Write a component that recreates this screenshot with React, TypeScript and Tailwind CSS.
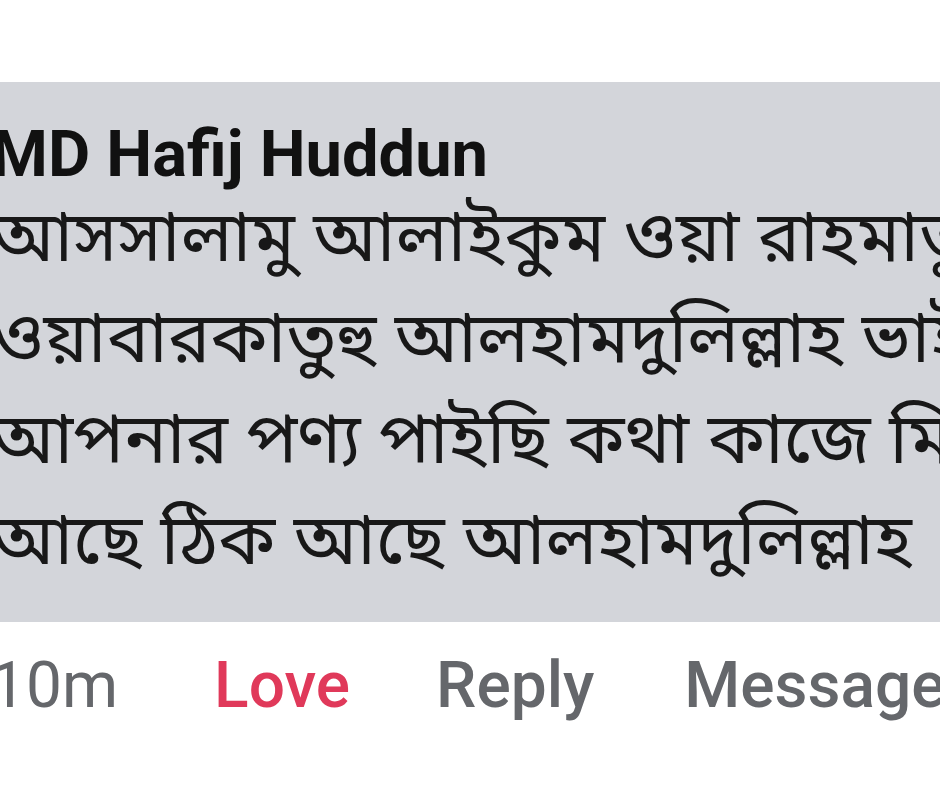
export default function App() {
  const lines = [
    "আসসালামু আলাইকুম ওয়া রাহমাতু",
    "ওয়াবারকাতুহু আলহামদুলিল্লাহ ভাই",
    "আপনার পণ্য পাইছি কথা কাজে মিল",
    "আছে ঠিক আছে আলহামদুলিল্লাহ",
  ];

  return (
    <div className="w-[940px] h-[788px] bg-white overflow-hidden font-['Roboto','Noto_Sans',sans-serif]">
      <div className="pt-[82px]">
        <div className="h-[540px] bg-[#d3d5da] overflow-hidden pt-[39px] -ml-[9px]">
          <p className="text-[65px] leading-[66px] font-bold text-[#111111] whitespace-nowrap">
            MD Hafij Huddun
          </p>
          <div className="mt-[6px] text-[#181818] font-['Noto_Sans_Bengali','Noto_Sans',sans-serif]">
            {lines.map((line) => (
              <p key={line} className="text-[71px] leading-[101px] whitespace-nowrap">
                {line}
              </p>
            ))}
          </div>
        </div>
        <div className="flex items-center pt-[32px] text-[64px] leading-[64px] whitespace-nowrap">
          <span className="-ml-[10px] text-[#65676b]">10m</span>
          <span className="ml-[96px] text-[#e0395a] font-medium">Love</span>
          <span className="ml-[86px] text-[#65676b] font-medium">Reply</span>
          <span className="ml-[90px] text-[#65676b] font-medium">Message</span>
        </div>
      </div>
    </div>
  );
}
